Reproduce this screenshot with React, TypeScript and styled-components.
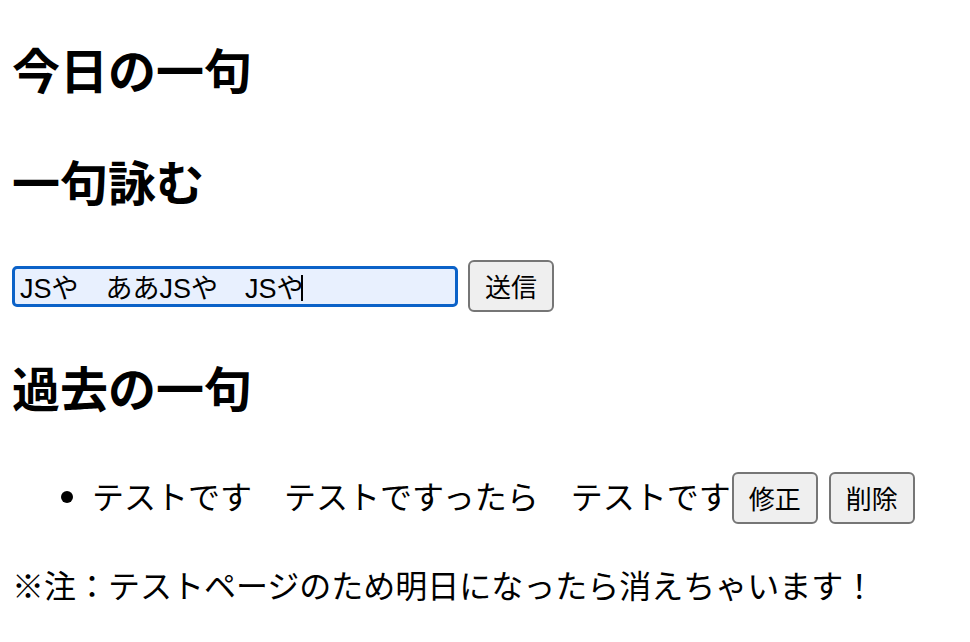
import styled, { createGlobalStyle } from "styled-components";
import { useEffect, useRef } from "react";

const GlobalStyle = createGlobalStyle`
  body {
    margin: 0;
    background: #fff;
    color: #000;
    font-family: "Noto Sans CJK JP", "Liberation Sans", sans-serif;
    font-size: 32px;
    line-height: 1.5;
  }
`;

const Page = styled.div`
  padding: 0 12px;
  display: flow-root;
`;

const Heading = styled.h2`
  font-size: 48px;
  font-weight: 700;
  line-height: 72px;
  margin: 40px 0;

  &:first-child {
    margin-top: 32px;
  }
`;

const Form = styled.form`
  display: flex;
  align-items: center;
  gap: 10px;
  padding: 4px 0 0;
  margin: 0 0 -2px;
`;

const Field = styled.div`
  position: relative;
  display: flex;
`;

const Input = styled.input`
  box-sizing: border-box;
  width: 446px;
  height: 41px;
  padding: 0 5px;
  border: 3px solid #0b62c8;
  border-radius: 5px;
  background: #e8f0fe;
  color: #000;
  font-family: "Liberation Sans", "Noto Sans CJK JP", sans-serif;
  font-size: 27px;
  outline: none;
  caret-color: transparent;
`;

/* the text cursor sitting after the typed text */
const Caret = styled.span`
  position: absolute;
  left: 289px;
  top: 9px;
  width: 2px;
  height: 26px;
  background: #000;
  pointer-events: none;
`;

const Button = styled.button<{ $gap?: number }>`
  box-sizing: border-box;
  height: 52px;
  padding: 0 15px;
  margin-left: ${(p) => p.$gap ?? 0}px;
  border: 2px solid #767676;
  border-radius: 6px;
  background: #efefef;
  color: #000;
  font-family: "Noto Sans CJK JP", sans-serif;
  font-size: 26px;
  line-height: 1;
  cursor: pointer;
`;

const List = styled.ul`
  margin: 43px 0 32px;
  padding-left: 80px;
`;

const Item = styled.li`
  line-height: 60px;
`;

const Note = styled.p`
  margin: 35px 0;
`;

const draft = "JSや\u3000ああJSや\u3000JSや";

export default function App() {
  const inputRef = useRef<HTMLInputElement>(null);

  useEffect(() => {
    const el = inputRef.current;
    if (!el) return;
    el.focus();
    el.setSelectionRange(draft.length, draft.length);
  }, []);

  return (
    <Page>
      <GlobalStyle />
      <Heading>今日の一句</Heading>
      <Heading>一句詠む</Heading>
      <Form onSubmit={(e) => e.preventDefault()}>
        <Field>
          <Input ref={inputRef} type="text" defaultValue={draft} />
          <Caret />
        </Field>
        <Button type="submit">送信</Button>
      </Form>
      <Heading>過去の一句</Heading>
      <List>
        <Item>
          <span>テストです　テストですったら　テストです</span>
          <Button $gap={1}>修正</Button>
          <Button $gap={11}>削除</Button>
        </Item>
      </List>
      <Note>※注：テストページのため明日になったら消えちゃいます！</Note>
    </Page>
  );
}
